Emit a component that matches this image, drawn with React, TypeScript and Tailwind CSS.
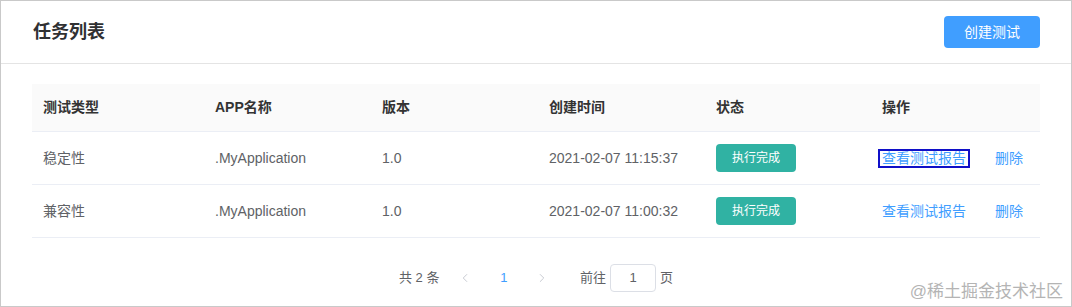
import React from "react";
import { ChevronLeft, ChevronRight } from "lucide-react";

const font = { fontFamily: '"Liberation Sans", "Noto Sans CJK SC", sans-serif' };

const cols = "grid grid-cols-[172px_167px_167px_167px_166px_169px]";

const rows = [
  { type: "稳定性", app: ".MyApplication", ver: "1.0", time: "2021-02-07 11:15:37", focus: true },
  { type: "兼容性", app: ".MyApplication", ver: "1.0", time: "2021-02-07 11:00:32", focus: false },
];

export default function App() {
  return (
    <div
      className="relative w-[1072px] h-[307px] border border-[#c9c9c9] bg-white overflow-hidden"
      style={font}
    >
      <div className="h-[63px] border-b border-[#e4e4e4] flex items-center justify-between pl-[32px] pr-[31px]">
        <div className="text-[18px] font-bold text-[#303133] leading-none">任务列表</div>
        <button className="w-[96px] h-[32px] rounded-[4px] bg-[#409eff] text-white text-[14px]">
          创建测试
        </button>
      </div>

      <div className="pt-[20px] px-[31px]">
        <div className={`${cols} h-[48px] bg-[#fafafa] border-b border-[#ebeef5] items-center text-[14px] font-bold text-[#333]`}>
          <div className="pl-[11px]">测试类型</div>
          <div className="pl-[11px]">APP名称</div>
          <div className="pl-[11px]">版本</div>
          <div className="pl-[11px]">创建时间</div>
          <div className="pl-[11px]">状态</div>
          <div className="pl-[11px]">操作</div>
        </div>
        {rows.map((r, i) => (
          <div
            key={i}
            className={`${cols} h-[53px] border-b border-[#ebeef5] items-center text-[14px] text-[#606266]`}
          >
            <div className="pl-[11px]">{r.type}</div>
            <div className="pl-[11px]">{r.app}</div>
            <div className="pl-[11px]">{r.ver}</div>
            <div className="pl-[11px]">{r.time}</div>
            <div className="pl-[11px]">
              <span className="inline-flex items-center justify-center w-[80px] h-[28px] rounded-[4px] bg-[#30b2a3] text-white text-[12px]">
                执行完成
              </span>
            </div>
            <div className="pl-[7px] flex items-center text-[#409eff]">
              <span
                className={`px-[2px] leading-[15px] border-2 ${r.focus ? "border-[#1010c8]" : "border-transparent"}`}
              >
                查看测试报告
              </span>
              <span className="ml-[25px]">删除</span>
            </div>
          </div>
        ))}

        <div className="mt-[26px] flex justify-center items-center h-[28px] text-[13px] text-[#606266]">
          <span className="w-[40px] whitespace-nowrap">共 2 条</span>
          <span className="ml-[10px] w-[32px] flex justify-center text-[#c0c4cc]">
            <ChevronLeft size={14} strokeWidth={1.5} />
          </span>
          <span className="w-[46px] text-center text-[#409eff] text-[13px]">1</span>
          <span className="w-[30px] flex justify-center text-[#c0c4cc]">
            <ChevronRight size={14} strokeWidth={1.5} />
          </span>
          <span className="ml-[23px]">前往</span>
          <span className="ml-[4px] w-[46px] h-[28px] border border-[#dcdfe6] rounded-[4px] flex items-center justify-center text-[#606266]">
            1
          </span>
          <span className="ml-[4px]">页</span>
        </div>
      </div>

      <div className="absolute right-[8px] bottom-[6px] text-[17px] text-[#b4b4b4] leading-none whitespace-nowrap">
        @稀土掘金技术社区
      </div>
    </div>
  );
}
